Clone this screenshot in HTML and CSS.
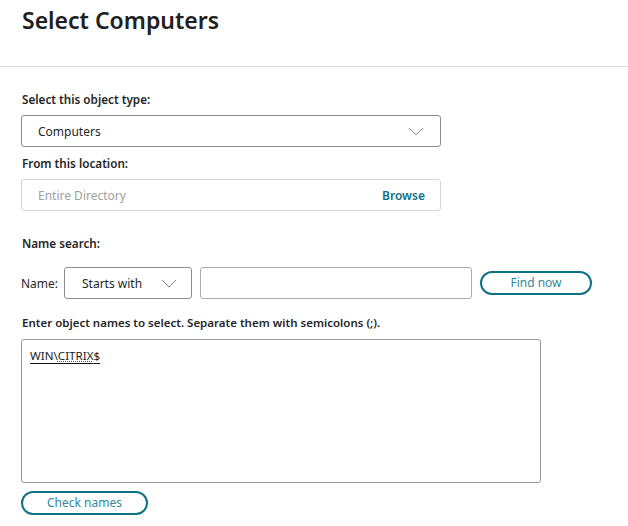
FILE: index.html
```html
<!DOCTYPE html>
<html>
<head>
<meta charset="utf-8">
<link rel="stylesheet" href="styles.css">
</head>
<body>
<header class="header">
  <h1 class="title">Select Computers</h1>
</header>
<main class="content">
  <div class="label">Select this object type:</div>
  <div class="select wide">
    <span>Computers</span>
    <svg class="chev" width="16" height="9" viewBox="0 0 16 9"><path d="M1 1 L8 8 L15 1" fill="none" stroke="#8a8a8a" stroke-width="1"/></svg>
  </div>
  <div class="label">From this location:</div>
  <div class="location">
    <span class="placeholder">Entire Directory</span>
    <span class="browse">Browse</span>
  </div>
  <div class="label section">Name search:</div>
  <div class="name-row">
    <span class="name-label">Name:</span>
    <div class="select small">
      <span>Starts with</span>
      <svg class="chev" width="16" height="9" viewBox="0 0 16 9"><path d="M1 1 L8 8 L15 1" fill="none" stroke="#8a8a8a" stroke-width="1"/></svg>
    </div>
    <div class="input"></div>
    <button class="btn find">Find now</button>
  </div>
  <div class="label names-label">Enter object names to select. Separate them with semicolons (;).</div>
  <div class="textarea"><span class="entry">WIN\<span class="spell">CITRIX</span>$</span></div>
  <button class="btn check">Check names</button>
</main>
</body>
</html>
```
FILE: styles.css
```css
* { box-sizing: border-box; }
body {
  margin: 0;
  font-family: "Noto Sans", "Liberation Sans", sans-serif;
  color: #222;
  background: #fff;
}
.header {
  height: 67px;
  border-bottom: 1px solid #dcdcdc;
  padding: 5px 0 0 22px;
}
.title {
  margin: 0;
  font-size: 23px;
  line-height: 30px;
  font-weight: 600;
  color: #202020;
}
.content {
  padding: 24px 0 0 21px;
  display: flex;
  flex-direction: column;
  align-items: flex-start;
}
.label {
  font-size: 11.7px;
  font-weight: 600;
  line-height: 16px;
  color: #262626;
  margin-left: 1px;
}
.select {
  display: flex;
  align-items: center;
  justify-content: space-between;
  height: 32px;
  border: 1px solid #8c8c8c;
  border-radius: 3px;
  font-size: 12px;
  color: #262626;
  margin: 8px 0;
}
.select.wide {
  width: 420px;
  padding: 0 16px 0 16px;
}
.chev { display: block; }
.location {
  width: 420px;
  height: 32px;
  margin-top: 8px;
  border: 1px solid #d4d4d4;
  border-radius: 3px;
  display: flex;
  align-items: center;
  justify-content: space-between;
  padding: 0 15px 0 16px;
  font-size: 12px;
}
.placeholder { color: #a0a0a0; }
.browse { color: #0d7286; font-weight: 600; }
.section { margin-top: 24px; }
.name-row {
  display: flex;
  align-items: center;
  margin-top: 16px;
  height: 32px;
}
.name-label {
  font-size: 12px;
  color: #262626;
  width: 43px;
}
.select.small {
  width: 128px;
  margin: 0 8px 0 0;
  padding: 0 14px 0 17px;
}
.input {
  width: 272px;
  height: 32px;
  border: 1px solid #ababab;
  border-radius: 3px;
  margin-right: 8px;
}
.btn {
  font-family: inherit;
  background: #fff;
  border: 2px solid #0d7286;
  border-radius: 12px;
  color: #2f8a9c;
  font-size: 12px;
  height: 24px;
  padding: 0;
  line-height: 20px;
}
.find { width: 112px; }
.names-label { margin-top: 16px; font-size: 11.5px; }
.textarea {
  width: 520px;
  height: 144px;
  margin-top: 8px;
  border: 1px solid #999;
  border-radius: 3px;
  padding: 7px 0 0 8px;
  font-size: 11.6px;
  line-height: 18px;
  color: #1a1a1a;
}
.entry {
  text-decoration: underline;
  text-decoration-color: #111;
  text-underline-offset: 3px;
}
.spell {
  text-decoration: underline dotted #e02020;
  text-decoration-thickness: 1px;
  text-underline-offset: 1px;
}
.check {
  width: 127px;
  margin-top: 8px;
}
```
